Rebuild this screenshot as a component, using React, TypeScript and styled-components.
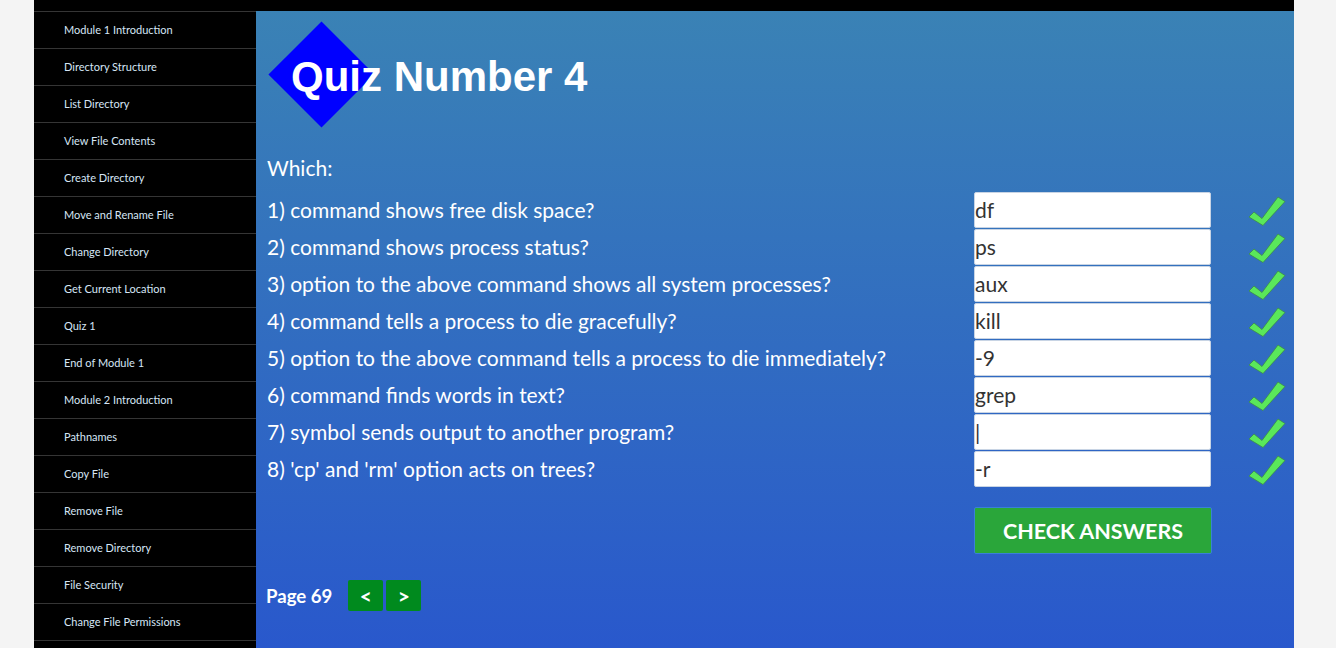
import React from "react";
import styled, { createGlobalStyle } from "styled-components";

const GlobalStyle = createGlobalStyle`
  html, body { margin: 0; padding: 0; overflow: hidden; }
  body { background: #f4f4f4; font-family: Lato, "Open Sans", sans-serif; }
`;

const Page = styled.div`
  width: 1260px;
  height: 648px;
  margin: 0 0 0 34px;
  display: flex;
  flex-direction: column;
  overflow: hidden;
`;

const TopBar = styled.div`
  height: 11px;
  background: #000;
  flex: none;
`;

const Body = styled.div`
  flex: 1;
  display: flex;
  min-height: 0;
`;

const Sidebar = styled.nav`
  width: 222px;
  flex: none;
  background: #000;
  display: flex;
  flex-direction: column;
`;

const NavItem = styled.a`
  display: flex;
  align-items: center;
  box-sizing: border-box;
  height: 37px;
  flex: none;
  border-top: 1px solid #353535;
  padding: 0 0 2px 30px;
  font-family: Lato, sans-serif;
  font-size: 11px;
  color: #d6e6f6;
  text-decoration: none;
  &:last-child {
    border-bottom: 1px solid #353535;
    height: 38px;
  }
`;

const Main = styled.main`
  flex: 1;
  background: linear-gradient(180deg, #3a82b5 0%, #2958cc 100%);
  padding: 0 0 0 11px;
  color: #fff;
  font-family: Lato, sans-serif;
`;

const Header = styled.header`
  position: relative;
  height: 131px;
  display: flex;
  align-items: center;
  margin-left: -11px;
  padding-left: 35px;
  &::before {
    content: "";
    position: absolute;
    left: 27.5px;
    top: 25.5px;
    width: 75px;
    height: 75px;
    background: #0000ff;
    transform: rotate(45deg);
  }
`;

const Title = styled.h1`
  position: relative;
  margin: 0;
  font-family: "Liberation Sans", Arial, sans-serif;
  font-weight: 700;
  font-size: 42px;
  color: #fff;
`;

const QuizGrid = styled.div`
  display: grid;
  grid-template-columns: 707px 237px 1fr;
  row-gap: 1px;
  align-items: center;
  margin-top: 14px;
`;

const Lead = styled.div`
  grid-column: 1 / -1;
  font-size: 21px;
  line-height: 24px;
  margin-bottom: 11px;
`;

const Question = styled.div`
  font-size: 21px;
  line-height: 24px;
`;

const Answer = styled.input`
  box-sizing: border-box;
  width: 237px;
  height: 36px;
  margin: 0;
  padding: 0 0 1px 0;
  border: 1px solid #c8d4e4;
  border-radius: 2px;
  background: #fff;
  font-family: Lato, sans-serif;
  font-size: 21px;
  color: #333;
  outline: none;
`;

const CheckCell = styled.div`
  padding-left: 37px;
  height: 36px;
  display: flex;
  align-items: center;
  padding-top: 4px;
  box-sizing: border-box;
`;

const CheckButton = styled.button`
  grid-column: 2;
  margin-top: 19px;
  box-sizing: border-box;
  width: 238px;
  height: 47px;
  background: #2aa63a;
  border: 1px solid #3a7fd8;
  border-radius: 2px;
  color: #fff;
  font-family: Lato, sans-serif;
  font-weight: 700;
  font-size: 21.5px;
  text-transform: uppercase;
  cursor: pointer;
`;

const Pager = styled.div`
  display: flex;
  align-items: center;
  margin-top: 26px;
  margin-left: -1px;
`;

const PageLabel = styled.span`
  font-weight: 700;
  font-size: 18.6px;
  margin-right: 16px;
`;

const PageButton = styled.button`
  box-sizing: border-box;
  width: 35px;
  height: 31px;
  margin-right: 3px;
  background: #008a1e;
  border: none;
  border-radius: 2px;
  color: #fff;
  font-family: Lato, sans-serif;
  font-weight: 700;
  font-size: 21px;
  padding: 0;
`;

const Check = () => (
  <svg width="38" height="32" viewBox="0 0 38 32">
    <path
      d="M1 21 L6 16 L14 22.5 L30 1 L37 5.5 L15 29.5 Z"
      fill="#5ae85a"
      stroke="#3c8c4a"
      strokeWidth="0.8"
      strokeLinejoin="round"
    />
  </svg>
);

const navItems = [
  "Module 1 Introduction",
  "Directory Structure",
  "List Directory",
  "View File Contents",
  "Create Directory",
  "Move and Rename File",
  "Change Directory",
  "Get Current Location",
  "Quiz 1",
  "End of Module 1",
  "Module 2 Introduction",
  "Pathnames",
  "Copy File",
  "Remove File",
  "Remove Directory",
  "File Security",
  "Change File Permissions",
];

const questions: [string, string][] = [
  ["1) command shows free disk space?", "df"],
  ["2) command shows process status?", "ps"],
  ["3) option to the above command shows all system processes?", "aux"],
  ["4) command tells a process to die gracefully?", "kill"],
  ["5) option to the above command tells a process to die immediately?", "-9"],
  ["6) command finds words in text?", "grep"],
  ["7) symbol sends output to another program?", "|"],
  ["8) 'cp' and 'rm' option acts on trees?", "-r"],
];

export default function App() {
  return (
    <>
      <GlobalStyle />
      <Page>
        <TopBar />
        <Body>
          <Sidebar>
            {navItems.map((n) => (
              <NavItem key={n} href="#">
                {n}
              </NavItem>
            ))}
          </Sidebar>
          <Main>
            <Header>
              <Title>Quiz Number 4</Title>
            </Header>
            <QuizGrid>
              <Lead>Which:</Lead>
              {questions.map(([q, a]) => (
                <React.Fragment key={q}>
                  <Question>{q}</Question>
                  <Answer defaultValue={a} />
                  <CheckCell>
                    <Check />
                  </CheckCell>
                </React.Fragment>
              ))}
              <CheckButton>Check Answers</CheckButton>
            </QuizGrid>
            <Pager>
              <PageLabel>Page 69</PageLabel>
              <PageButton>&lt;</PageButton>
              <PageButton>&gt;</PageButton>
            </Pager>
          </Main>
        </Body>
      </Page>
    </>
  );
}
